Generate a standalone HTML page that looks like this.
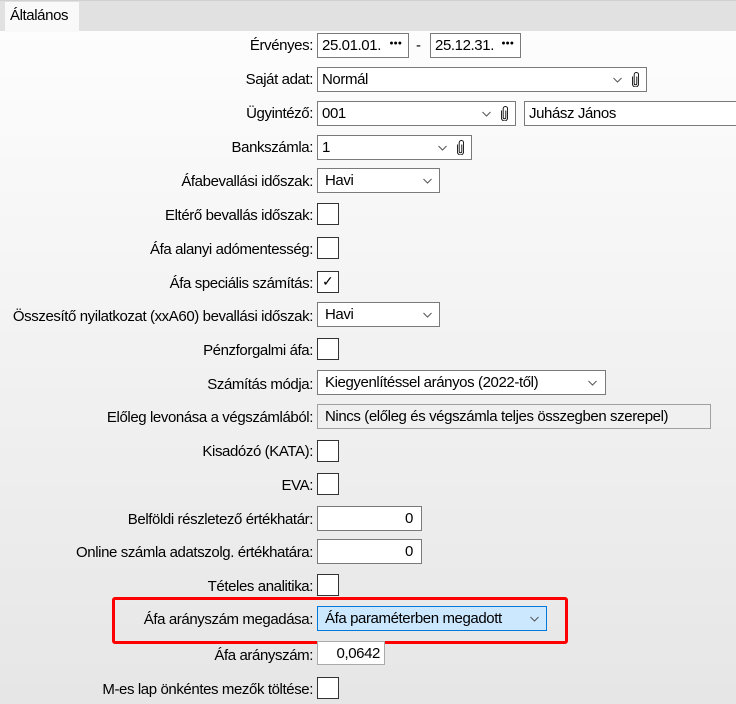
<!DOCTYPE html>
<html><head><meta charset="utf-8"><style>
*{box-sizing:border-box;margin:0;padding:0}
body{width:736px;height:704px;overflow:hidden;position:relative;font-family:"Segoe UI","Liberation Sans",sans-serif;font-size:15px;color:#000;background:linear-gradient(#fdfdfd 30px,#f2f2f2 350px,#e6e6e6 704px);letter-spacing:-0.4px}
.tabbar{position:absolute;left:0;top:0;width:736px;height:31px;background:#e1e1e1;border-top:1px solid #d0d0d0}
.tab{position:absolute;left:5px;top:2px;width:74px;height:30px;background:#f9f9f9;padding:5px 0 0 5px;font-size:15px}
.l{position:absolute;right:423px;white-space:nowrap;text-align:right}
.b{position:absolute;left:317px;background:#fff;border:1px solid #7a7a7a;height:25px;padding:3px 4px 0;white-space:nowrap;overflow:hidden}
.cb{position:absolute;left:317px;width:22px;height:22px;background:#fff;border:1px solid #333}
.chev{position:absolute;top:7px;width:9px;height:9px}
.clip{position:absolute;top:4px;width:7px;height:15px}
.dots{position:absolute;right:6px;top:6px;font-size:7px;letter-spacing:0}
</style></head><body>
<div class="tabbar"></div>
<div class="tab">Általános</div>

<svg width="0" height="0" style="position:absolute"><defs>
<symbol id="ch" viewBox="0 0 9 9"><path d="M0.5 3 L4.5 7 L8.5 3" fill="none" stroke="#555" stroke-width="1"/></symbol>
<symbol id="cl" viewBox="0 0 8 17"><path d="M5.5 5 V13 a1.5 1.5 0 0 1 -3 0 V3 a2.5 2.5 0 0 1 5 0 V13.5 a3.5 3.5 0 0 1 -7 0 V5" fill="none" stroke="#111" stroke-width="1.1"/></symbol>
</defs></svg>

<div class="l" style="top:37px">Érvényes:</div>
<div class="b" style="top:33px;width:92px">25.01.01.<span class="dots">●●●</span></div>
<div style="position:absolute;left:416px;top:37px">-</div>
<div class="b" style="top:33px;left:430px;width:91px">25.12.31.<span class="dots">●●●</span></div>

<div class="l" style="top:71px">Saját adat:</div>
<div class="b" style="top:67px;width:330px">Normál<svg class="chev" style="left:295px"><use href="#ch"/></svg><svg class="clip" style="left:314px"><use href="#cl"/></svg></div>

<div class="l" style="top:105px">Ügyintéző:</div>
<div class="b" style="top:101px;width:199px">001<svg class="chev" style="left:164px"><use href="#ch"/></svg><svg class="clip" style="left:183px"><use href="#cl"/></svg></div>
<div class="b" style="top:101px;left:524px;width:220px">Juhász János</div>

<div class="l" style="top:139px">Bankszámla:</div>
<div class="b" style="top:135px;width:155px">1<svg class="chev" style="left:120px"><use href="#ch"/></svg><svg class="clip" style="left:139px"><use href="#cl"/></svg></div>

<div class="l" style="top:173px">Áfabevallási időszak:</div>
<div class="b" style="top:168px;width:123px;padding-left:7px">Havi<svg class="chev" style="left:105px"><use href="#ch"/></svg></div>

<div class="l" style="top:207px">Eltérő bevallás időszak:</div>
<div class="cb" style="top:203px"></div>
<div class="l" style="top:241px">Áfa alanyi adómentesség:</div>
<div class="cb" style="top:237px"></div>
<div class="l" style="top:275px">Áfa speciális számítás:</div>
<div class="cb" style="top:271px"><span style="position:absolute;left:4px;top:1px;font-size:14px">✓</span></div>

<div class="l" style="top:308px">Összesítő nyilatkozat (xxA60) bevallási időszak:</div>
<div class="b" style="top:302px;width:123px;padding-left:7px">Havi<svg class="chev" style="left:105px"><use href="#ch"/></svg></div>

<div class="l" style="top:342px">Pénzforgalmi áfa:</div>
<div class="cb" style="top:338px"></div>

<div class="l" style="top:376px">Számítás módja:</div>
<div class="b" style="top:370px;width:289px;padding-left:7px">Kiegyenlítéssel arányos (2022-től)<svg class="chev" style="left:270px"><use href="#ch"/></svg></div>

<div class="l" style="top:409px">Előleg levonása a végszámlából:</div>
<div class="b" style="top:404px;width:394px;background:#f0f0f0;border-color:#a0a0a0;padding-left:7px">Nincs (előleg és végszámla teljes összegben szerepel)</div>

<div class="l" style="top:443px">Kisadózó (KATA):</div>
<div class="cb" style="top:440px"></div>
<div class="l" style="top:477px">EVA:</div>
<div class="cb" style="top:473px"></div>

<div class="l" style="top:511px">Belföldi részletező értékhatár:</div>
<div class="b" style="top:506px;width:105px;text-align:right;padding-right:8px">0</div>
<div class="l" style="top:544px">Online számla adatszolg. értékhatára:</div>
<div class="b" style="top:539px;width:105px;text-align:right;padding-right:8px">0</div>

<div class="l" style="top:578px">Tételes analitika:</div>
<div class="cb" style="top:574px"></div>

<div style="position:absolute;left:112px;top:597px;width:456px;height:47px;border:3px solid #f00;border-radius:3px"></div>
<div class="l" style="top:611px">Áfa arányszám megadása:</div>
<div class="b" style="top:606px;width:230px;background:#cce8ff;border-color:#0078d7;padding-left:7px">Áfa paraméterben megadott<svg class="chev" style="left:212px"><use href="#ch"/></svg></div>

<div class="l" style="top:647px">Áfa arányszám:</div>
<div class="b" style="top:641px;width:68px;height:24px;text-align:right;padding-right:4px;border-color:#aaa">0,0642</div>

<div class="l" style="top:681px">M-es lap önkéntes mezők töltése:</div>
<div class="cb" style="top:677px"></div>
</body></html>
